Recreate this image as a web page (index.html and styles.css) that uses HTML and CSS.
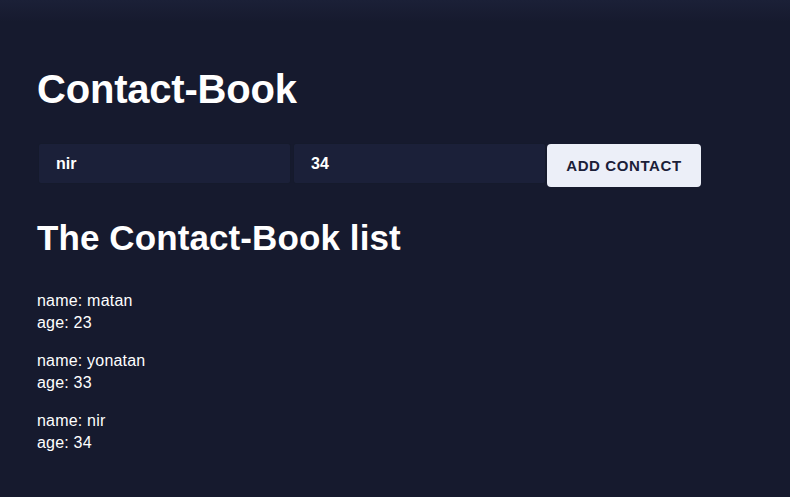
FILE: index.html
```html
<!DOCTYPE html>
<html>
<head>
<meta charset="utf-8">
<title>Contact-Book</title>
<link rel="stylesheet" href="styles.css">
</head>
<body>
<main class="page">
  <h1 class="title">Contact-Book</h1>
  <form class="add-form">
    <input class="field" type="text" value="nir">
    <input class="field" type="text" value="34">
    <button class="add-btn" type="button">ADD CONTACT</button>
  </form>
  <h2 class="subtitle">The Contact-Book list</h2>
  <ul class="list">
    <li class="contact"><div>name: matan</div><div>age: 23</div></li>
    <li class="contact"><div>name: yonatan</div><div>age: 33</div></li>
    <li class="contact"><div>name: nir</div><div>age: 34</div></li>
  </ul>
</main>
</body>
</html>
```
FILE: styles.css
```css
html, body {
  margin: 0;
  height: 100%;
}
body {
  background: linear-gradient(to bottom, #1b2037 0px, #161a2e 22px, #161a2e 100%);
  color: #ffffff;
  font-family: "Liberation Sans", Arial, sans-serif;
}
.page {
  padding: 66px 0 0 37px;
}
.title {
  margin: 0;
  font-size: 40px;
  line-height: 46px;
  font-weight: bold;
  letter-spacing: -0.2px;
}
.add-form {
  display: flex;
  align-items: flex-start;
  margin-top: 31px;
}
.field {
  box-sizing: border-box;
  width: 253px;
  height: 41px;
  margin-right: 2px;
  padding: 0 17px;
  background: #1b2039;
  border: 1px solid #151a2c;
  border-radius: 3px;
  color: #ffffff;
  font-family: "Liberation Sans", Arial, sans-serif;
  font-size: 16px;
  font-weight: bold;
  outline: none;
}
.field:first-child {
  margin-left: 1px;
}
.add-btn {
  box-sizing: border-box;
  width: 154px;
  height: 43px;
  margin-top: 1px;
  margin-left: -1px;
  background: #eceff8;
  border: none;
  border-radius: 4px;
  color: #1b2038;
  font-family: "Liberation Sans", Arial, sans-serif;
  font-size: 15px;
  font-weight: bold;
  letter-spacing: 0.6px;
  cursor: pointer;
}
.subtitle {
  margin: 31px 0 0 0;
  font-size: 35px;
  line-height: 40px;
  font-weight: bold;
  letter-spacing: 0.1px;
}
.list {
  list-style: none;
  margin: 32px 0 0 0;
  padding: 0;
  font-size: 16px;
  line-height: 22px;
  letter-spacing: 0.2px;
}
.contact {
  margin-bottom: 16px;
}
```
